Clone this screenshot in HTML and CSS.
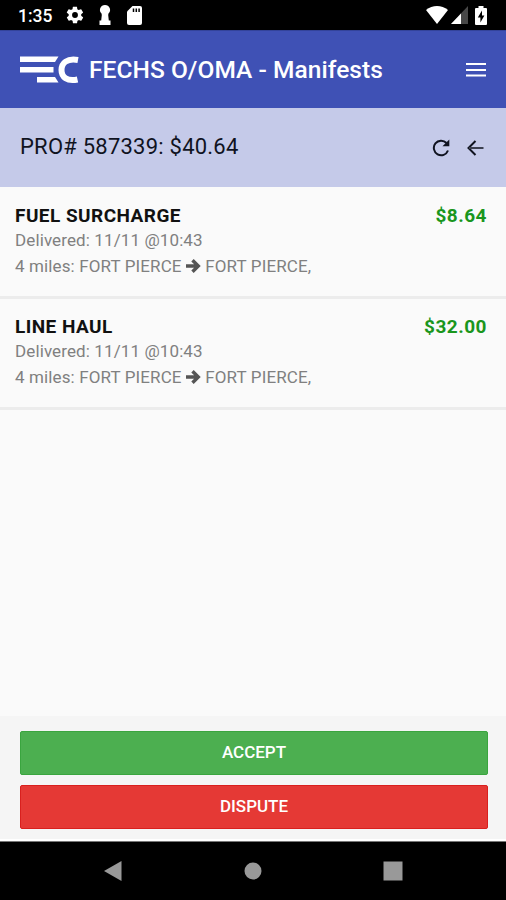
FILE: index.html
```html
<!DOCTYPE html>
<html lang="en">
<head>
<meta charset="utf-8">
<title>FECHS O/OMA - Manifests</title>
<meta name="viewport" content="width=device-width, initial-scale=1.0">
<link rel="stylesheet" href="styles.css">
</head>
<body>
<div class="statusbar">
	<span class="clock">1:35</span>
	<svg class="gear" width="20" height="20" viewBox="0 0 24 24"><path fill="#fff" fill-rule="evenodd" d="M19.4 13c0-.3.1-.6.1-1s0-.7-.1-1l2.1-1.600c.2-.2.3-.4.1-.7l-2-3.400c-.1-.2-.4-.3-.6-.2l-2.500 1c-.5-.4-1.100-.7-1.700-1l-.4-2.600c0-.3-.2-.5-.5-.5h-4c-.2 0-.4.2-.5.5L9 5.100c-.6.2-1.200.6-1.700 1l-2.500-1c-.2-.1-.5 0-.6.2l-2 3.400c-.1.3 0 .5.100.7L4.500 11c0 .3-.1.700-.1 1s0 .7.1 1l-2.100 1.600c-.2.200-.3.400-.1.700l2 3.400c.1.200.400.300.600.200l2.500-1c.5.400 1.100.7 1.700 1l.4 2.600c0 .300.200.500.500.500h4c.2 0 .500-.200.500-.500l.4-2.600c.6-.200 1.200-.600 1.700-1l2.500 1c.2.100.500 0 .600-.200l2-3.400c.1-.300.100-.500-.1-.700zM12 15.500a3.500 3.500 0 1 1 0-7 3.500 3.500 0 0 1 0 7z"/></svg>
	<svg class="keyhole" width="12" height="20" viewBox="0 0 12 20"><path fill="#fff" d="M6 0a5 5 0 0 1 3.500 8.600L9.200 10l.6 5.500H11.500v4.500H.5v-4.500h1.700L2.800 10l-.3-1.400A5 5 0 0 1 6 0z"/></svg>
	<svg class="sdcard" width="15" height="19" viewBox="0 0 15 19"><path fill="#fff" d="M5.500 0H13a2 2 0 0 1 2 2v15a2 2 0 0 1-2 2H2a2 2 0 0 1-2-2V5.500z"/><path stroke="#000" stroke-width="1.500" d="M6.500 2.500V6M9.300 2.500V6M12.100 2.500V6"/></svg>
	<svg class="wifi" width="22" height="18" viewBox="0 0 22 18"><path fill="#fff" d="M0 4C6.500-1.300 15.500-1.300 22 4L11 18z"/></svg>
	<svg class="signal" width="17" height="18" viewBox="0 0 17 18"><path fill="#484848" d="M17 0v18H0z"/><path fill="#fff" d="M10 7.400V18H0z"/></svg>
	<svg class="battery" width="12" height="19" viewBox="0 0 12 19"><path fill="#fff" d="M3.500 0h5v2H11a1 1 0 0 1 1 1v15a1 1 0 0 1-1 1H1a1 1 0 0 1-1-1V3a1 1 0 0 1 1-1h2.500z"/><path fill="#000" d="M7 4.500L2.800 11.500h2.600V16.500l4-7H7z"/></svg>
</div>
<header class="appbar">
	<svg class="logo" width="60" height="28" viewBox="0 0 60 28">
		<path fill="#fff" d="M1 .5h38.500l-3.500 5.500H1zM1 11h33.500v5.500H1zM18 21h18l3.500 5.500H18z"/>
		<path fill="none" stroke="#fff" stroke-width="6" d="M59 4C48 2 42.500 7 42.500 14S48 25.800 58.500 23.500"/>
	</svg>
	<h1>FECHS O/OMA - Manifests</h1>
	<svg class="menu" width="20" height="16" viewBox="0 0 20 16"><path stroke="#fff" stroke-width="2" d="M0 2h20M0 8h20M0 13.500h20"/></svg>
</header>
<div class="subbar">
	<h2>PRO# 587339: $40.64</h2>
	<svg class="refresh" width="18" height="18" viewBox="0 0 18 18"><path fill="none" stroke="#10131f" stroke-width="2" d="M16 11.500A7.300 7.300 0 1 1 14.500 4"/><path fill="#10131f" d="M17.300.5v6.800h-6.800z"/></svg>
	<svg class="back" width="17" height="16" viewBox="0 0 17 16"><path fill="none" stroke="#10131f" stroke-width="2" d="M8.500 1L1.500 8l7 7"/><path stroke="#3c4050" stroke-width="2" d="M2 8h14.500"/></svg>
</div>
<ul class="charges">
	<li>
		<h3>FUEL SURCHARGE</h3>
		<span class="amount">$8.64</span>
		<p>Delivered: 11/11 @10:43</p>
		<p class="route">4 miles: FORT PIERCE <svg width="15" height="14" viewBox="0 0 15 14"><path fill="none" stroke="#555" stroke-width="3.400" d="M0 7h12M6.500 1.200L12.300 7l-5.800 5.800"/></svg> FORT PIERCE,</p>
	</li>
	<li>
		<h3>LINE HAUL</h3>
		<span class="amount">$32.00</span>
		<p>Delivered: 11/11 @10:43</p>
		<p class="route">4 miles: FORT PIERCE <svg width="15" height="14" viewBox="0 0 15 14"><path fill="none" stroke="#555" stroke-width="3.400" d="M0 7h12M6.500 1.200L12.300 7l-5.800 5.800"/></svg> FORT PIERCE,</p>
	</li>
</ul>
<footer class="actions">
	<button class="accept">ACCEPT</button>
	<button class="dispute">DISPUTE</button>
</footer>
<nav class="navbar">
	<svg width="20" height="22" viewBox="0 0 20 22"><path fill="#999" d="M18.500 1v20L1 11z"/></svg>
	<svg width="18" height="18" viewBox="0 0 18 18"><circle cx="9" cy="9" r="8.500" fill="#999"/></svg>
	<svg width="20" height="20" viewBox="0 0 20 20"><path fill="#999" d="M.5.500h19v19H.5z"/></svg>
</nav>
</body>
</html>
```
FILE: styles.css
```css
*{
	box-sizing: border-box;
}
body{
	margin: 0;
	height: 900px;
	display: flex;
	flex-direction: column;
	overflow: hidden;
	font-family: Roboto, 'Liberation Sans', sans-serif;
	background: #fafafa;
}
h1, h2, h3, p, ul{
	margin: 0;
	padding: 0;
	font-weight: 400;
	white-space: nowrap;
}
svg{
	display: block;
	flex: none;
}
.statusbar{
	height: 30px;
	display: flex;
	align-items: center;
	padding: 0 19px 0 18px;
	background: #000;
	color: #fff;
}
.clock{
	width: 47px;
	font-size: 17.5px;
	font-weight: 500;
	line-height: 30px;
	padding-top: 2px;
}
.keyhole{
	margin-left: 14px;
}
.sdcard{
	margin-left: 16px;
}
.wifi{
	margin-left: auto;
}
.signal{
	margin-left: 3px;
}
.battery{
	margin-left: 7px;
}
.appbar{
	height: 78px;
	display: flex;
	align-items: center;
	padding: 0 20px 0 19px;
	background: #3f51b5;
	border-top: 1px solid #33439a;
	color: #fff;
}
.appbar h1{
	margin-left: 10px;
	font-size: 24.5px;
	font-weight: 500;
	letter-spacing: .05px;
}
.menu{
	margin-left: auto;
}
.subbar{
	height: 79px;
	display: flex;
	align-items: center;
	padding: 0 22px 0 20px;
	background: #c5cae9;
	color: #10131f;
}
.subbar h2{
	margin-bottom: 3px;
	font-size: 22px;
	letter-spacing: .23px;
}
.refresh{
	margin-left: auto;
}
.back{
	margin-left: 17px;
}
.charges{
	list-style: none;
	flex: 1;
	padding-top: 1px;
}
.charges li{
	height: 111px;
	display: grid;
	grid-template-columns: 1fr auto;
	grid-template-rows: 24px 26px 26px;
	padding: 15px 19px 0 15px;
	border-bottom: 3px solid #ececec;
	line-height: 26px;
}
.charges h3{
	font-size: 19px;
	font-weight: 700;
	letter-spacing: .45px;
	color: #111;
}
.amount{
	font-size: 19px;
	font-weight: 700;
	letter-spacing: .5px;
	color: #1a961d;
}
.charges p{
	grid-column: 1 / 3;
	font-size: 17px;
	letter-spacing: .11px;
	color: #808080;
}
.charges .route{
	letter-spacing: .12px;
}
.route svg{
	display: inline-block;
	vertical-align: -1px;
}
.actions{
	height: 125px;
	display: flex;
	flex-direction: column;
	gap: 10px;
	padding: 15px 18px 0 20px;
	background: #f5f5f5;
	border-bottom: 2px solid #fff;
}
.actions button{
	height: 44px;
	padding: 0 0 2px;
	border: 1px solid;
	border-radius: 2px;
	font: 500 17px Roboto, 'Liberation Sans', sans-serif;
	color: #fff;
}
.actions .accept{
	background: #4caf50;
	border-color: #3aa53f;
}
.actions .dispute{
	background: #e53935;
	border-color: #d9201e;
}
.navbar{
	height: 59px;
	display: flex;
	align-items: center;
	justify-content: space-between;
	padding: 0 103px;
	background: #000;
	border-top: 1px solid #777;
}
```
